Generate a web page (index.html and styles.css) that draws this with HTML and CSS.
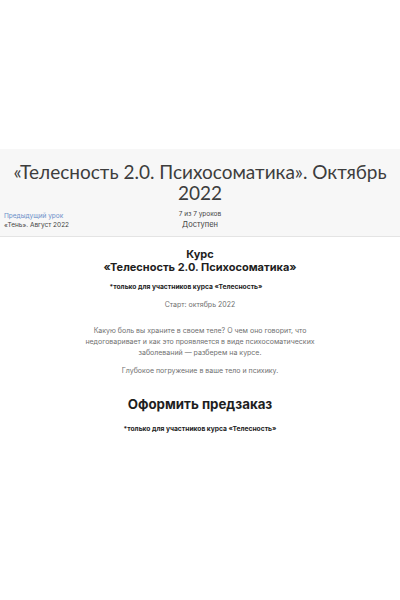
FILE: index.html
```html
<!DOCTYPE html>
<html lang="ru">
<head>
<meta charset="utf-8">
<link rel="stylesheet" href="styles.css">
</head>
<body>
<div class="top-space"></div>
<header class="lesson-head">
  <h1 class="lesson-title">«Телесность 2.0. Психосоматика». Октябрь 2022</h1>
  <div class="lesson-meta">
    <div class="prev">
      <a class="prev-link" href="#">Предыдущий урок</a>
      <div class="prev-name">«Тень». Август 2022</div>
    </div>
    <div class="status">
      <div class="count">7 из 7 уроков</div>
      <div class="avail">Доступен</div>
    </div>
    <div class="next"></div>
  </div>
</header>
<main class="content">
  <h2 class="course-title">Курс<br>«Телесность 2.0. Психосоматика»</h2>
  <p class="note note-first">*только для участников курса «Телесность»</p>
  <p class="start">Старт: октябрь 2022</p>
  <p class="desc">Какую боль вы храните в своем теле? О чем оно говорит, что недоговаривает и как это проявляется в виде психосоматических заболеваний — разберем на курсе.</p>
  <p class="desc">Глубокое погружение в ваше тело и психику.</p>
  <h2 class="order-title">Оформить предзаказ</h2>
  <p class="note">*только для участников курса «Телесность»</p>
</main>
</body>
</html>
```

FILE: styles.css
```css
html, body {
  margin: 0;
  padding: 0;
  background: #fff;
}
body {
  font-family: "Inter", "Open Sans", sans-serif;
  color: #333;
}
.top-space {
  height: 149px;
}
.lesson-head {
  background: #f7f7f7;
  border-bottom: 1px solid #e4e4e4;
  height: 88px;
  box-sizing: border-box;
  padding-top: 12px;
}
.lesson-title {
  margin: 0;
  text-align: center;
  font-family: "Lato", "Inter", sans-serif;
  font-weight: 400;
  font-size: 19px;
  line-height: 21px;
  color: #3d3d3d;
  padding: 0 8px;
}
.lesson-meta {
  display: grid;
  grid-template-columns: 1fr 1fr 1fr;
  margin-top: 7px;
  padding: 0 4px;
}
.prev {
  font-size: 6.5px;
  line-height: 9px;
  padding-top: 2px;
}
.prev-link {
  color: #6a8fc8;
  text-decoration: none;
  display: block;
}
.prev-name {
  color: #444;
}
.status {
  text-align: center;
  color: #444;
}
.count {
  font-size: 6.5px;
  line-height: 9px;
}
.avail {
  font-size: 7.5px;
  line-height: 12px;
}
.content {
  text-align: center;
  padding-top: 11px;
}
.course-title {
  margin: 0;
  font-size: 11px;
  line-height: 13px;
  font-weight: 700;
  color: #1e1e1e;
}
.note {
  margin: 0;
  font-size: 6.7px;
  line-height: 9px;
  font-weight: 700;
  color: #222;
}
.note-first {
  margin-top: 9px;
  padding-right: 28px;
}
.start {
  margin: 8px 0 0;
  font-size: 7px;
  line-height: 9px;
  color: #707070;
}
.desc {
  margin: 16px auto 0;
  width: 240px;
  font-size: 7px;
  line-height: 11px;
  color: #707070;
}
.desc + .desc {
  margin-top: 7px;
}
.order-title {
  margin: 19px 0 0;
  font-size: 13.3px;
  line-height: 18px;
  font-weight: 700;
  color: #1e1e1e;
}
.order-title + .note {
  margin-top: 12px;
}
```
